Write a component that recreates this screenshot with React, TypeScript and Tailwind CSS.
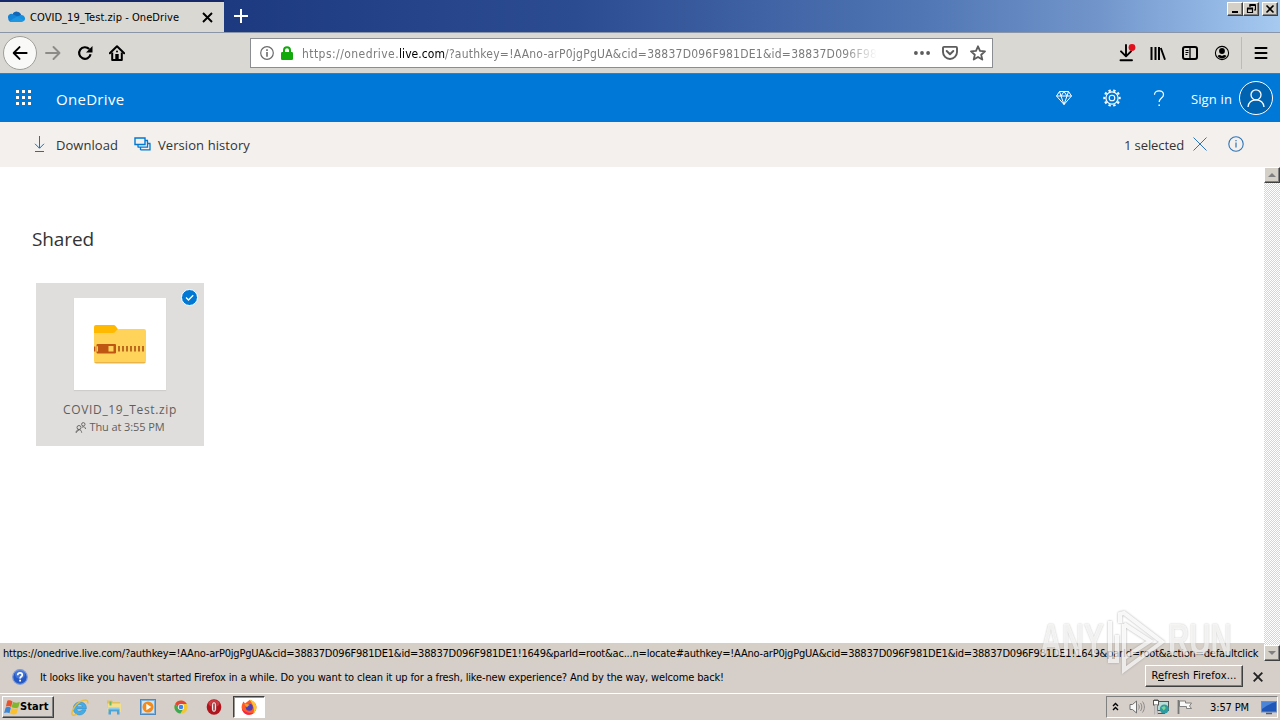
import type { ReactNode } from "react";

const UI = "font-['DejaVu_Sans_Condensed','DejaVu_Sans',sans-serif] whitespace-nowrap text-black";
const SEGOE = "font-['Open_Sans','Noto_Sans',sans-serif] whitespace-nowrap";
const RAISED =
  "border border-t-white border-l-white border-r-[#404040] border-b-[#404040] shadow-[inset_-1px_-1px_0_#808080]";

const STATUS_URL =
  "https://onedrive.live.com/?authkey=!AAno-arP0jgPgUA&cid=38837D096F981DE1&id=38837D096F981DE1!1649&parId=root&ac...n=locate#authkey=!AAno-arP0jgPgUA&cid=38837D096F981DE1&id=38837D096F981DE1!1649&parId=root&action=defaultclick";

function Slot({ children }: { children: ReactNode }) {
  return <div className="flex h-8 w-8 shrink-0 items-center justify-center">{children}</div>;
}

function Icon({ children, size = "size-4", box = "0 0 16 16" }: { children: ReactNode; size?: string; box?: string }) {
  return (
    <svg className={`${size} shrink-0`} viewBox={box} fill="none" stroke="currentColor">
      {children}
    </svg>
  );
}

function CloudLogo() {
  return (
    <svg className="h-[11px] w-[17px] shrink-0" viewBox="0 0 17 11">
      <path d="M4.500 3.500A4.600 4.600 0 0 1 13.200 4l-4 4H2z" fill="#1166b8" />
      <path d="M.3 7.600A3.400 3.400 0 0 1 5 3.200l5 2.600L3 11A3.300 3.300 0 0 1 .3 7.600z" fill="#1484d7" />
      <path d="M9 5.400 13.200 4A3.500 3.500 0 0 1 16 9.900L11 8z" fill="#1490df" />
      <path d="M1.400 10 9.200 5.400l7 4.200c-.6.9-1.500 1.400-2.700 1.400H3.600c-.9 0-1.600-.3-2.200-1z" fill="#1f96e0" />
    </svg>
  );
}

function TabStrip() {
  return (
    <div className="flex h-8 shrink-0 items-start bg-[linear-gradient(90deg,#172f74_0%,#1d3a80_18%,#2c4c92_45%,#5076b4_72%,#7296cb_86%,#8fb4e2_94%,#a6caf0_100%)]">
      <div className="flex h-8 w-[224px] items-center border-t-2 border-[#15296b] bg-[#dad8d2] pr-[11px] pl-[8px]">
        <div className="-mt-px">
          <CloudLogo />
        </div>
        <span className={`${UI} mt-px ml-[5px] text-[11px] leading-4 tracking-[0.06px]`}>COVID_19_Test.zip - OneDrive</span>
        <div className="ml-auto flex size-3 items-center justify-center">
          <Icon size="size-[11px]" box="0 0 11 11">
            <path d="M1 1l9 9M10 1l-9 9" strokeWidth="1.900" />
          </Icon>
        </div>
      </div>
      <div className="ml-[10px] flex h-8 items-center text-white">
        <Icon size="size-[14px]" box="0 0 14 14">
          <path d="M7 0v14M0 7h14" strokeWidth="2" />
        </Icon>
      </div>
      <div className="mt-[2px] mr-[2px] ml-auto flex">
        <WinButton>
          <path d="M2 8h6" strokeWidth="2" />
        </WinButton>
        <WinButton>
          <path d="M4 3V1h5.500v5H8M4 1.500h5.500" strokeWidth="1.200" />
          <path d="M1.500 4.500h5v4h-5zM1.500 4.500h5" strokeWidth="1.200" />
          <path d="M1 4.500h6M3.500 1h6" strokeWidth="1.800" />
        </WinButton>
        <div className="w-[3px]" />
        <WinButton>
          <path d="M1.500 1.500l7 7M8.500 1.500l-7 7" strokeWidth="1.600" />
        </WinButton>
      </div>
    </div>
  );
}

function WinButton({ children }: { children: ReactNode }) {
  return (
    <div className={`${RAISED} flex h-[14px] w-4 items-center justify-center bg-[#d4d0c8] text-black`}>
      <Icon size="size-[10px]" box="0 0 10 10">
        {children}
      </Icon>
    </div>
  );
}

function NavBar() {
  return (
    <div className="flex h-[41px] shrink-0 items-center border-t border-[#8b95a8] bg-[#dad8d2] text-black">
      <div className="ml-[3px] flex size-[34px] items-center justify-center rounded-full border border-[#a09e9a] bg-[#f9f9f7]">
        <Icon size="size-4" box="0 0 18 18">
          <path d="M16.500 9H2M8.500 2.300L1.900 9l6.600 6.700" strokeWidth="2.100" strokeLinejoin="round" strokeLinecap="round" />
        </Icon>
      </div>
      <div className="flex w-8 justify-center text-[#8d8b88]">
        <Icon size="size-4">
          <path d="M1 8h13.500M8.500 2l6 6-6 6" strokeWidth="1.900" strokeLinejoin="round" strokeLinecap="round" />
        </Icon>
      </div>
      <Slot>
        <Icon>
          <path d="M13.600 9.300A5.800 5.800 0 1 1 12.200 4.100" strokeWidth="2.200" />
          <path d="M15.500 1v6.500H9z" fill="currentColor" stroke="none" />
        </Icon>
      </Slot>
      <Slot>
        <Icon>
          <path d="M.8 8.300L8 1.300l7.200 7" strokeWidth="2" strokeLinejoin="round" strokeLinecap="round" />
          <path d="M3.200 7.500V15h9.600V7.500" strokeWidth="2" strokeLinejoin="round" />
          <path d="M6.300 15V9h3.400v6z" fill="currentColor" stroke="none" />
          <circle cx="8" cy="6.600" r="1" fill="currentColor" stroke="none" />
        </Icon>
      </Slot>
      <div className="ml-[117px] flex h-[30px] w-[743px] items-center border border-[#8a8d92] bg-white">
        <div className="ml-[9px] text-[#6b6b6b]">
          <Icon size="size-[14px]" box="0 0 14 14">
            <circle cx="7" cy="7" r="6.300" strokeWidth="1.200" />
            <path d="M7 6v4.700M7 3.300v1.600" strokeWidth="1.600" />
          </Icon>
        </div>
        <svg className="ml-[7px] h-[14px] w-3 shrink-0" viewBox="0 0 12 14">
          <path d="M3 7V4.200a3 3 0 0 1 6 0V7" fill="none" stroke="#12a90c" strokeWidth="2" />
          <rect x="0" y="6" width="12" height="8" rx="1.200" fill="#12a90c" />
        </svg>
        <div className={`${UI} ml-[9px] w-[575px] overflow-hidden [mask-image:linear-gradient(90deg,#000_94%,transparent)]`}>
          <span className="text-[12px] leading-4 tracking-[0.44px] text-[#7b7b7b]">https://onedrive.</span>
          <span className="text-[12px] leading-4 tracking-[0.06px] text-black">live.com</span>
          <span className="text-[12px] leading-4 tracking-[0.23px] text-[#7b7b7b]">
            /?authkey=!AAno-arP0jgPgUA&amp;cid=38837D096F981DE1&amp;id=38837D096F98
          </span>
        </div>
        <div className="ml-auto flex items-center pr-[6px] text-[#5c5c5c]">
          <svg className="h-4 w-4" viewBox="0 0 16 16" fill="currentColor">
            <circle cx="1.900" cy="8" r="1.900" />
            <circle cx="8" cy="8" r="1.900" />
            <circle cx="14.100" cy="8" r="1.900" />
          </svg>
          <div className="ml-3">
            <Icon>
              <path d="M2 1.900h12a1 1 0 0 1 1 1V7A7 7 0 0 1 1 7V2.900a1 1 0 0 1 1-1z" strokeWidth="1.900" />
              <path d="M4.700 6L8 9.200 11.300 6" strokeWidth="2" strokeLinecap="round" strokeLinejoin="round" />
            </Icon>
          </div>
          <div className="ml-3">
            <Icon>
              <path
                d="M8 1.300l2 4.600 5 .5-3.800 3.300 1.100 4.900L8 12l-4.300 2.600 1.100-4.900L1 6.400l5-.5z"
                strokeWidth="1.800"
                strokeLinejoin="round"
              />
            </Icon>
          </div>
        </div>
      </div>
      <div className="ml-auto flex items-center">
        <Slot>
          <svg className="ml-[2px] size-[18px]" viewBox="0 0 18 18" fill="none" stroke="currentColor">
            <path d="M8 1v11M3 7.300l5 5 5-5" strokeWidth="1.900" strokeLinejoin="round" strokeLinecap="round" />
            <path d="M2.500 16.300h11.500" strokeWidth="1.900" strokeLinecap="round" />
            <circle cx="14" cy="3.500" r="3.400" fill="#e0101c" stroke="none" />
          </svg>
        </Slot>
        <Slot>
          <Icon>
            <path d="M1.500 2v13M5.500 2v13M9 2v13" strokeWidth="2" />
            <path d="M10.800 3l4.200 11.800" strokeWidth="1.900" />
          </Icon>
        </Slot>
        <Slot>
          <Icon>
            <rect x="1" y="2" width="14" height="12" rx="2" strokeWidth="2" />
            <path d="M8 2v12" strokeWidth="1.300" />
            <path d="M3.500 5.500h3M3.500 7.500h3M3.500 9.500h2" strokeWidth="1" />
          </Icon>
        </Slot>
        <Slot>
          <Icon>
            <circle cx="8" cy="8" r="6.600" strokeWidth="1.100" />
            <circle cx="8" cy="6" r="2.900" fill="currentColor" stroke="none" />
            <path d="M3.600 11c1.400-1.400 2.700-1 4.400.1 1.700-1.100 3-1.500 4.400-.1A5.200 5.200 0 0 1 3.600 11z" fill="currentColor" stroke="none" />
          </Icon>
        </Slot>
        <div className="ml-[3px] h-8 w-px bg-[#bdbbb5]" />
        <div className="mr-[3px] ml-[3px]">
          <Slot>
            <Icon>
              <path d="M2.500 3h11M2.500 8h11M2.500 13h11" strokeWidth="2" strokeLinecap="round" />
            </Icon>
          </Slot>
        </div>
      </div>
    </div>
  );
}

function SuiteHeader() {
  return (
    <div className="flex h-[49px] shrink-0 items-center border-t border-[#3d7db5] bg-[#0078d7] text-white">
      <div className="mb-[2px] ml-4 grid grid-cols-3 gap-[3px]">
        {Array.from({ length: 9 }, (_, i) => (
          <div key={i} className="size-[3px] bg-white" />
        ))}
      </div>
      <span className={`${SEGOE} mt-px ml-[25px] text-[15px] leading-5 font-medium tracking-[0.3px]`}>OneDrive</span>
      <div className="ml-auto flex items-center">
        <div className="mr-[31px]">
          <Icon>
            <path d="M3.500 1.500h9L15.500 6 8 14.500.5 6zM.5 6h15M3.500 1.500L5 6l3 8.500L11 6l1.500-4.500M5 6l3-4.500L11 6" strokeWidth="1" />
          </Icon>
        </div>
        <div className="mr-[32px]">
          <Icon size="size-[18px]" box="0 0 18 18">
            <circle cx="9" cy="9" r="2.800" strokeWidth="1.100" />
            <circle cx="9" cy="9" r="6.100" strokeWidth="1.200" />
            <circle cx="9" cy="9" r="7.700" strokeWidth="2" pathLength="20" strokeDasharray="1 1" strokeDashoffset="0.500" />
          </Icon>
        </div>
        <Icon size="h-[17px] w-3" box="0 0 12 17">
          <path d="M1.500 4.800C1.500 2.300 3.300.8 6 .8s4.500 1.500 4.500 3.900C10.500 8 6.200 8.200 6.200 12" strokeWidth="1.200" />
          <path d="M6.200 14.500V16" strokeWidth="1.500" />
        </Icon>
        <span className={`${SEGOE} mt-px ml-[26px] text-[13px] leading-5 tracking-[0.15px]`}>Sign in</span>
        <div className="mr-[7px] ml-[7px] flex size-[34px] items-center justify-center rounded-full border border-white bg-[#0063b1]">
          <Icon size="size-[18px]" box="0 0 18 18">
            <circle cx="9" cy="5.800" r="5" strokeWidth="1.300" />
            <path d="M1 18c.5-4.500 3.500-7.200 8-7.200s7.500 2.700 8 7.200" strokeWidth="1.300" />
          </Icon>
        </div>
      </div>
    </div>
  );
}

function CommandBar() {
  return (
    <div className="flex h-[45px] shrink-0 items-center bg-[#f3f0ee] pb-[2px] text-[#333]">
      <div className="ml-[32px] flex w-4 justify-center text-[#0078d4]">
        <Icon size="h-4 w-3" box="0 0 12 16">
          <path d="M5.500 0v12M1 7.800l4.500 4.500 4.500-4.500M1 15.500h9" strokeWidth="1" />
        </Icon>
      </div>
      <span className={`${SEGOE} mt-[2px] ml-[8px] text-[13px] leading-5 tracking-[0.05px]`}>Download</span>
      <div className="ml-4 text-[#0078d4]">
        <Icon size="h-4 w-[17px]" box="0 0 17 16">
          <path d="M1 2h10v6.500H1z" strokeWidth="1.400" />
          <path d="M13.500 4.500v6.700H4M4 9v2.500M16 7.500v6.300H6.500M6.500 11.500v2.500M11 4.500h3M13.500 7.500H16.500" strokeWidth="1.300" />
        </Icon>
      </div>
      <span className={`${SEGOE} mt-[2px] ml-[7px] text-[13px] leading-5 tracking-[0.08px]`}>Version history</span>
      <span className={`${SEGOE} mt-[2px] ml-auto text-[13px] leading-5 tracking-[-0.1px]`}>1 selected</span>
      <div className="ml-[9px] text-[#2f74b5]">
        <Icon size="size-[14px]" box="0 0 14 14">
          <path d="M.5.5l13 13M13.500.5l-13 13" strokeWidth="1" />
        </Icon>
      </div>
      <div className="mr-[36px] ml-[21px] text-[#2f74b5]">
        <Icon>
          <circle cx="8" cy="8" r="7.200" strokeWidth="1.100" />
          <path d="M8 6.500v5M8 4v1.300" strokeWidth="1.200" />
        </Icon>
      </div>
    </div>
  );
}

function ZipFolder() {
  return (
    <svg className="h-[39px] w-[54px]" viewBox="0 0 54 39">
      <path d="M1 2a2 2 0 0 1 2-2h17.500c2 0 2.500 1.500 4.500 4.500V14H1z" fill="#ffb900" />
      <path d="M1 8h19c3 0 3-4 6-4h25a2 2 0 0 1 2 2v30a2 2 0 0 1-2 2H3a2 2 0 0 1-2-2z" fill="#ffd35a" />
      <path d="M1.300 37a2 2 0 0 0 1.700 1.500h48a2 2 0 0 0 1.700-1.500z" fill="#e9b54a" />
      <rect x="3.500" y="19" width="19.500" height="9.500" rx="1" fill="#bf5712" />
      <rect x="15.500" y="21" width="5" height="5.500" fill="#ffd15a" />
      <path d="M1.700 21.500v5" stroke="#bf5712" strokeWidth="1.400" />
      <path d="M4.300 21.200v5.200" stroke="#ffd75e" strokeWidth="1.200" />
      <path d="M25 23.700h28" stroke="#bd6a1f" strokeWidth="5.500" strokeDasharray="2 2" />
    </svg>
  );
}

function FileTile() {
  return (
    <div className="relative flex h-[163px] w-[168px] flex-col items-center bg-[#e0dedd] pt-[15px]">
      <div className="flex size-[92px] items-center justify-center bg-white shadow-[0_1px_1px_#cfcdcc]">
        <ZipFolder />
      </div>
      <span className={`${SEGOE} mt-3 text-[12px] leading-4 tracking-[0.65px] text-[#5f5d5b]`}>COVID_19_Test.zip</span>
      <div className="mt-px flex items-center gap-[3px] text-[#605e5c]">
        <Icon size="size-[11px]" box="0 0 11 11">
          <circle cx="8.300" cy="2.300" r="1.700" strokeWidth="0.900" />
          <circle cx="4" cy="5.500" r="2" strokeWidth="0.900" />
          <path d="M1 10.700c.2-2 1.200-3 3-3s2.400 1 2.700 3M7 5.200c2-1 3.200-.2 3.600 1.800M1 10.500l3-2.800" strokeWidth="0.900" />
        </Icon>
        <span className={`${SEGOE} text-[11px] leading-4 tracking-[-0.1px]`}>Thu at 3:55 PM</span>
      </div>
      <div className="absolute top-[6px] right-[6px] flex size-[17px] items-center justify-center rounded-full border border-white bg-[#0078d4] text-white">
        <Icon size="size-[9px]" box="0 0 9 9">
          <path d="M1 4.500L3.500 7 8.200 2.300" strokeWidth="1.300" />
        </Icon>
      </div>
    </div>
  );
}

function ScrollBar() {
  return (
    <div className="flex w-4 shrink-0 flex-col justify-between bg-[repeating-conic-gradient(#fff_0_25%,#d8d4ce_0_50%)] bg-[size:2px_2px]">
      <ScrollButton d="M0 4l4-4 4 4z" />
      <ScrollButton d="M0 0l4 4 4-4z" />
    </div>
  );
}

function ScrollButton({ d }: { d: string }) {
  return (
    <div className={`${RAISED} flex h-4 w-4 items-center justify-center bg-[#d4d0c8]`}>
      <svg className="h-1 w-2" viewBox="0 0 8 4">
        <path d={d} fill="#808080" />
      </svg>
    </div>
  );
}

function Notification() {
  return (
    <div className="flex h-8 shrink-0 items-center bg-[#d6cec8]">
      <svg className="ml-3 size-4 shrink-0" viewBox="0 0 16 16">
        <circle cx="8" cy="8" r="7.300" fill="#2458c5" stroke="#7d9bd8" strokeWidth="1.200" />
        <circle cx="8" cy="5" r="5" fill="#6f9bea" opacity=".45" />
        <path d="M5.700 6.200C5.700 4.600 6.700 3.800 8 3.800s2.300.8 2.300 2.100c0 1.600-2.200 1.600-2.200 3.500" fill="none" stroke="#fff" strokeWidth="1.700" />
        <rect x="7.200" y="10.700" width="1.800" height="1.800" fill="#fff" />
      </svg>
      <span className={`${UI} mt-[2px] ml-3 text-[11px] leading-4 tracking-[-0.146px]`}>
        It looks like you haven't started Firefox in a while. Do you want to clean it up for a fresh, like-new experience? And by the way,
        welcome back!
      </span>
      <div className={`${RAISED} mb-[3px] ml-auto flex h-[22px] w-[98px] items-center justify-center bg-[#d6cec8]`}>
        <span className={`${UI} mt-px text-[11px] leading-4 tracking-[0.14px]`}>
          R<u>e</u>fresh Firefox...
        </span>
      </div>
      <div className="mr-[17px] ml-[10px] text-[#222]">
        <Icon size="size-[10px]" box="0 0 10 10">
          <path d="M.7.7l8.600 8.600M9.300.7L.7 9.300" strokeWidth="1.900" />
        </Icon>
      </div>
    </div>
  );
}

function WindowsFlag() {
  return (
    <svg className="h-[15px] w-4 shrink-0" viewBox="0 0 16 15">
      <path d="M3.300.8C5.200 0 6.800.3 8.500 1.500L7.200 7C5.500 5.900 3.900 5.800 1.900 6.600z" fill="#e8532b" />
      <path d="M9 1.900c2.200 1 4.200 1 6.800 0L14.300 7.400c-2.300 1-4.500.9-6.700-.1z" fill="#7fb72f" />
      <path d="M1.700 7.400c1.900-.8 3.500-.7 5.200.3l-1.400 5.600c-1.600-1.100-3.500-1.200-5.400-.3z" fill="#3b87d6" />
      <path d="M7.400 8c2.200 1 4.400 1 6.700.1l-1.600 5.700c-2.300.9-4.400.8-6.500-.2z" fill="#fbc02a" />
    </svg>
  );
}

function Taskbar() {
  return (
    <div className="flex h-[27px] shrink-0 items-center border-t border-white bg-[#d6cec8]">
      <div className={`${RAISED} ml-[2px] flex h-[22px] w-[52px] items-center bg-[#d6cec8] pl-px`}>
        <WindowsFlag />
        <span className={`${UI} text-[11px] leading-4 font-bold tracking-[0.1px]`}>Start</span>
      </div>
      <div className="ml-[17px] flex items-center">
        <svg className="h-[17px] w-[18px]" viewBox="0 0 17 16">
          <path
            d="M14.500 9.300H5.500c.2 2.400 3 3.100 5 .9h3.600c-1.200 3.300-3.100 4.800-5.900 4.800-3.500 0-6-2.600-6-6S4.800 2.800 8.300 2.800c3.900 0 6.500 2.500 6.200 6.500zM5.600 7.200h5.300c-.3-2.400-5-2.600-5.300 0z"
            fill="#43aee6"
            stroke="#2b86c4"
            strokeWidth=".5"
          />
          <path d="M1.300 14.800C-.5 12 4.500 3.500 11.500 1.300c3.300-1 4.900.3 4.200 2.900M1.300 14.800c1 1 2.500.5 4-.5" fill="none" stroke="#e9bd3e" strokeWidth="1.400" />
        </svg>
        <svg className="ml-[17px] size-4" viewBox="0 0 16 16">
          <path d="M1 1.500h5L7 3h7v6H1z" fill="#dfc25e" />
          <path d="M1.500 4.500h13.500V13H1.500z" fill="#f3df8d" />
          <path d="M2.500 15.500v-5.500h11v5.500H11v-3H5v3z" fill="#4ba3d6" />
          <path d="M2.500 8.500h11v2h-11z" fill="#8fcdeb" />
          <path d="M3.500 2.500h2v4h-2z" fill="#6cb865" />
        </svg>
        <svg className="ml-[18px] size-4" viewBox="0 0 16 16">
          <rect x=".5" y=".5" width="15" height="15" fill="#7db3df" stroke="#4e88bd" />
          <rect x="2" y="2" width="12" height="12" fill="#cfe3f3" />
          <circle cx="8" cy="8" r="5.500" fill="#f28a1c" />
          <path d="M6.300 4.800v6.400L11.300 8z" fill="#fff" />
        </svg>
        <svg className="ml-[18px] size-[14px]" viewBox="0 0 16 16">
          <circle cx="8" cy="8" r="7.500" fill="#f4c62f" />
          <path d="M1.500 4.200A7.500 7.500 0 0 1 14.600 4.500H8L5 9.500z" fill="#e2463a" />
          <path d="M1.500 4.200A7.500 7.500 0 0 0 7.300 15.500l3.300-5.500H5z" fill="#3fa653" />
          <circle cx="8" cy="8" r="3.500" fill="#fff" />
          <circle cx="8" cy="8" r="2.700" fill="#3f86ea" />
        </svg>
        <svg className="ml-[18px] h-4 w-4" viewBox="0 0 15 16">
          <ellipse cx="7.500" cy="8" rx="7.300" ry="7.700" fill="#b3131b" />
          <ellipse cx="7.500" cy="4.500" rx="5.500" ry="3.500" fill="#e5636a" opacity=".5" />
          <ellipse cx="7.500" cy="8" rx="2.500" ry="5.200" fill="#fbf3f3" stroke="#7d0a10" strokeWidth=".6" />
          <path d="M7.500 4.500v7" stroke="#8d0d14" strokeWidth="1.300" />
        </svg>
        <div className="ml-[11px] flex h-[22px] w-8 items-center justify-center border border-t-[#404040] border-r-white border-b-white border-l-[#404040] bg-white shadow-[inset_1px_1px_0_#9a9692]">
          <svg className="size-4" viewBox="0 0 16 16">
            <path
              d="M8.500 1C12 1.500 15.500 4 15.500 8.500A7.300 7.300 0 0 1 8 15.800 7.400 7.400 0 0 1 .6 8.500C.6 6 1.500 4 2.500 2.500L4 4.500z"
              fill="#ff5a2a"
            />
            <path d="M8.500.4c3.700 1 6.900 4 6.900 8a7 7 0 0 1-3 5.800C14 9.500 12 5.500 8.500.4z" fill="#ffc62b" />
            <path d="M1 10c1 4 4 5.800 7 5.800 2 0 3.500-.6 4.700-1.700C8 14.500 3.500 13 1 10z" fill="#f2264e" />
            <circle cx="8.300" cy="8.200" r="3.500" fill="#4a3fb8" />
            <path d="M3.500 5.500c2-.8 4-.6 5.500.5-1 .5-2.300.8-3 2.500z" fill="#ff9a1f" />
          </svg>
        </div>
      </div>
      <div className="mr-[2px] ml-auto flex h-[22px] w-[172px] items-center border border-t-[#808080] border-r-white border-b-white border-l-[#808080]">
        <Icon size="mb-px ml-[5px] h-[9px] w-[7px]" box="0 0 7 9">
          <path d="M1 4l2.500-2.500L6 4M1 8l2.500-2.500L6 8" stroke="#000" strokeWidth="1.400" />
        </Icon>
        <svg className="ml-[10px] h-4 w-[17px] shrink-0" viewBox="0 0 17 16" fill="none" stroke="#707070">
          <path d="M1 5.500h2.500L7.500 2v12l-4-3.500H1z" fill="#f7f7f7" strokeWidth="1" />
          <path d="M9.500 5.500c1 1.500 1 3.500 0 5M11.500 4c1.800 2.500 1.800 5.500 0 8M13.500 2.500c2.500 3.500 2.500 7.500 0 11" stroke="#8b8b8b" strokeWidth="1" />
        </svg>
        <svg className="ml-[7px] size-4 shrink-0" viewBox="0 0 16 16">
          <rect x="4.500" y="2.500" width="11" height="9" fill="#bcdcd8" stroke="#4d5759" />
          <path d="M5 14.500h7" stroke="#555" />
          <rect x=".5" y="1.500" width="5" height="4.500" fill="#fff" stroke="#555" />
          <path d="M2 0v2M4 0v2" stroke="#555" />
          <path d="M3 6v9.500" stroke="#fff" strokeWidth="2.600" />
          <path d="M2 6v9.500M4 6v9.500" stroke="#666" strokeWidth=".7" />
          <circle cx="11.300" cy="10" r="4.500" fill="#2f9aa0" />
          <path d="M8.300 8.500l3-1.500 1.500 2-2 2.500z" fill="#7fd38f" />
        </svg>
        <svg className="ml-[8px] size-4 shrink-0" viewBox="0 0 16 16">
          <path d="M1.500 1v14" stroke="#777" strokeWidth="1.800" />
          <path d="M2.500 2h6v2h6l-2 3 2 2.500h-5v-2h-7z" fill="#f8f8f8" stroke="#777" strokeWidth=".9" />
        </svg>
        <span className={`${UI} mt-px ml-[17px] text-[11px] leading-4 tracking-[-0.12px]`}>3:57 PM</span>
        <svg className="ml-auto h-[15px] w-4 shrink-0" viewBox="0 0 16 15">
          <rect x=".5" y="1.500" width="15" height="10.500" fill="#1e57b7" stroke="#6f8fc4" />
          <path d="M1 2h14C10 3 5 6 1 9z" fill="#4c84d8" />
          <path d="M5 13.500h6" stroke="#4a5a78" strokeWidth="1.500" />
        </svg>
      </div>
    </div>
  );
}

function Watermark() {
  const letters =
    "origin-left text-[44px] leading-[44px] font-bold text-white/80 font-['Liberation_Sans',Arial,sans-serif] [text-shadow:0_0_2px_#a8a4a2]";
  return (
    <div className="pointer-events-none absolute top-[608px] left-[1040px] h-[68px] w-[200px] opacity-75">
      <div className={`${letters} absolute top-[10px] left-0 scale-x-[0.69]`}>ANY</div>
      <div className={`${letters} absolute top-[10px] left-[128px] scale-x-[0.67]`}>RUN</div>
      <svg className="absolute top-0 left-[66px] h-[68px] w-[62px] drop-shadow-[0_0_1px_#8c8886]" viewBox="0 0 62 68" fill="none">
        <path d="M4 13v40h7V27M18 16v46l38-28L18 5l-4 1v9M18 16l26 17-26 17" stroke="#fff" strokeOpacity=".9" strokeWidth="4" />
      </svg>
    </div>
  );
}

export default function App() {
  return (
    <div className="relative flex h-[720px] w-[1280px] flex-col overflow-hidden bg-white">
      <TabStrip />
      <NavBar />
      <SuiteHeader />
      <CommandBar />
      <div className="relative flex h-[494px] shrink-0">
        <div className="flex flex-1 flex-col items-start pt-[60px]">
          <h1 className={`${SEGOE} ml-8 text-[19px] leading-6 tracking-[-0.1px] text-[#333]`}>Shared</h1>
          <div className="mt-8 ml-9">
            <FileTile />
          </div>
        </div>
        <ScrollBar />
        <div className="absolute bottom-0 left-0 flex h-[18px] w-[1264px] items-center bg-[#d5cfc7] pt-[3px] pl-[3px]">
          <span className={`${UI} text-[11px] leading-4 tracking-[-0.2px]`}>{STATUS_URL}</span>
        </div>
      </div>
      <Notification />
      <Taskbar />
      <Watermark />
    </div>
  );
}
